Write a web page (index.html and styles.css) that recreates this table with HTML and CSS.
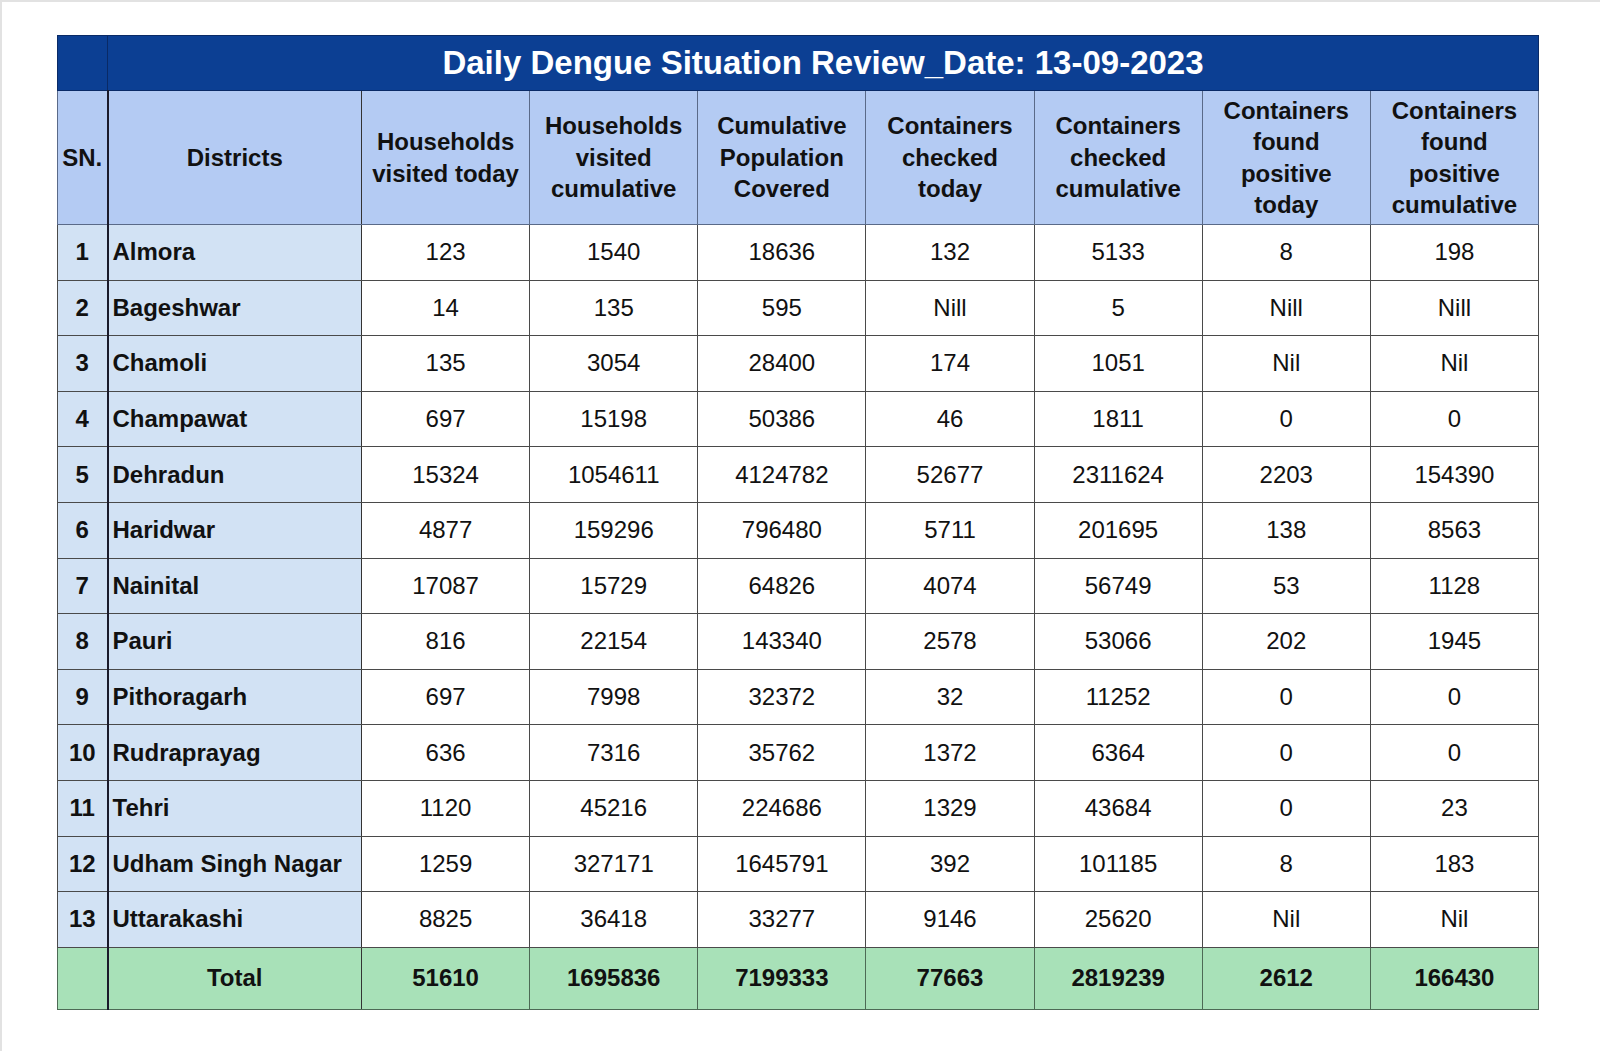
FILE: index.html
```html
<!DOCTYPE html>
<html>
<head>
<meta charset="utf-8">
<link rel="stylesheet" href="styles.css">
</head>
<body>
<div class="page">
<table class="report">
<colgroup>
<col class="c-sn"><col class="c-dist"><col><col><col><col><col><col><col>
</colgroup>
<thead>
<tr class="title-row"><th class="title-sn"></th><th colspan="8" class="title">Daily Dengue Situation Review_Date: 13-09-2023</th></tr>
<tr class="head-row">
<th class="sn">SN.</th>
<th>Districts</th>
<th>Households visited today</th>
<th>Households visited cumulative</th>
<th>Cumulative Population Covered</th>
<th>Containers checked today</th>
<th>Containers checked cumulative</th>
<th>Containers found positive today</th>
<th>Containers found positive cumulative</th>
</tr>
</thead>
<tbody>
<tr><td class="sn">1</td><td class="dist">Almora</td><td>123</td><td>1540</td><td>18636</td><td>132</td><td>5133</td><td>8</td><td>198</td></tr>
<tr><td class="sn">2</td><td class="dist">Bageshwar</td><td>14</td><td>135</td><td>595</td><td>Nill</td><td>5</td><td>Nill</td><td>Nill</td></tr>
<tr><td class="sn">3</td><td class="dist">Chamoli</td><td>135</td><td>3054</td><td>28400</td><td>174</td><td>1051</td><td>Nil</td><td>Nil</td></tr>
<tr><td class="sn">4</td><td class="dist">Champawat</td><td>697</td><td>15198</td><td>50386</td><td>46</td><td>1811</td><td>0</td><td>0</td></tr>
<tr><td class="sn">5</td><td class="dist">Dehradun</td><td>15324</td><td>1054611</td><td>4124782</td><td>52677</td><td>2311624</td><td>2203</td><td>154390</td></tr>
<tr><td class="sn">6</td><td class="dist">Haridwar</td><td>4877</td><td>159296</td><td>796480</td><td>5711</td><td>201695</td><td>138</td><td>8563</td></tr>
<tr><td class="sn">7</td><td class="dist">Nainital</td><td>17087</td><td>15729</td><td>64826</td><td>4074</td><td>56749</td><td>53</td><td>1128</td></tr>
<tr><td class="sn">8</td><td class="dist">Pauri</td><td>816</td><td>22154</td><td>143340</td><td>2578</td><td>53066</td><td>202</td><td>1945</td></tr>
<tr><td class="sn">9</td><td class="dist">Pithoragarh</td><td>697</td><td>7998</td><td>32372</td><td>32</td><td>11252</td><td>0</td><td>0</td></tr>
<tr><td class="sn">10</td><td class="dist">Rudraprayag</td><td>636</td><td>7316</td><td>35762</td><td>1372</td><td>6364</td><td>0</td><td>0</td></tr>
<tr><td class="sn">11</td><td class="dist">Tehri</td><td>1120</td><td>45216</td><td>224686</td><td>1329</td><td>43684</td><td>0</td><td>23</td></tr>
<tr><td class="sn">12</td><td class="dist">Udham Singh Nagar</td><td>1259</td><td>327171</td><td>1645791</td><td>392</td><td>101185</td><td>8</td><td>183</td></tr>
<tr><td class="sn">13</td><td class="dist">Uttarakashi</td><td>8825</td><td>36418</td><td>33277</td><td>9146</td><td>25620</td><td>Nil</td><td>Nil</td></tr>
</tbody>
<tfoot>
<tr class="total-row"><td class="sn"></td><td>Total</td><td>51610</td><td>1695836</td><td>7199333</td><td>77663</td><td>2819239</td><td>2612</td><td>166430</td></tr>
</tfoot>
</table>
</div>
</body>
</html>
```
FILE: styles.css
```css
html, body {
  margin: 0;
  padding: 0;
  background: #ffffff;
}
body {
  font-family: "Liberation Sans", Arial, sans-serif;
  color: #111;
}
.page {
  box-sizing: border-box;
  width: 1600px;
  height: 1051px;
  border-top: 2px solid #e2e2e2;
  border-left: 2px solid #e2e2e2;
  padding: 33px 0 0 55px;
}
.report {
  border-collapse: collapse;
  table-layout: fixed;
  width: 1482px;
}
.c-sn { width: 50px; }
.c-dist { width: 254px; }
.report th, .report td {
  border: 1px solid #4a4a4a;
  padding: 0;
  text-align: center;
  vertical-align: middle;
}
.title-row th {
  background: #0c3f93;
  height: 54px;
  border-color: #0a2a66;
}
.title {
  color: #ffffff;
  font-size: 33px;
  font-weight: bold;
  padding-top: 4px;
}
.head-row th {
  background: #b4cbf3;
  height: 133px;
  font-size: 24px;
  line-height: 31.5px;
  font-weight: bold;
  color: #111;
  padding: 0 6px;
  border-color: #5a6a88;
}
.head-row th.sn { padding: 0; }
tbody td {
  height: 54.6px;
  font-size: 24px;
  background: #ffffff;
  border-color: #555;
  padding-top: 2px;
}
tbody td.sn {
  background: #d2e2f4;
  font-weight: bold;
}
tbody td.dist {
  background: #d2e2f4;
  font-weight: bold;
  text-align: left;
  padding-left: 4px;
}
.report .sn {
  border-right: 2px solid #1a1a2a;
}
.report td.dist, .head-row th:nth-child(2), .total-row td:nth-child(2) {
  border-right: 1px solid #333;
}
.total-row td {
  height: 61px;
  background: #a8e1b8;
  font-size: 24px;
  font-weight: bold;
  border-color: #4d6a55;
}
.total-row td.sn {
  border-right: 2px solid #1a1a2a;
}
```
